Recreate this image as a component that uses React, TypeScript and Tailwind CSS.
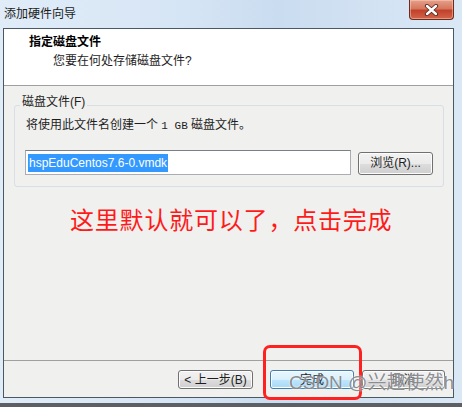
import React from 'react';

const FONT = "font-['Liberation_Sans','Noto_Sans_CJK_SC',sans-serif]";

function WinButton({ label, primary }: { label: string; primary?: boolean }) {
  return (
    <button
      className={
        'w-full h-[19px] rounded-[3px] border text-[12px] leading-none text-[#1e1e1e] flex items-center justify-center ' +
        (primary
          ? 'border-[#3c7fb1] bg-[linear-gradient(#eaf6fd_0%,#d9f0fc_50%,#bee6fd_51%,#a7d9f5_100%)] shadow-[inset_0_0_0_1px_#fff]'
          : 'border-[#707070] bg-[linear-gradient(#f2f2f2_0%,#ebebeb_50%,#dddddd_51%,#cfcfcf_100%)] shadow-[inset_0_0_0_1px_#fcfcfc]')
      }
    >
      {label}
    </button>
  );
}

export default function App() {
  return (
    <div className={`relative w-[462px] h-[407px] overflow-hidden bg-[#5c5f63] ${FONT}`}>
      {/* window frame */}
      <div className="flex flex-col h-[403px] bg-[linear-gradient(90deg,#e0ecf8,#d6e5f5_40%,#cadcf0_60%,#dae8f6)]">
        {/* title bar */}
        <div className="h-[28px] flex items-start justify-between shrink-0">
          <span className="pl-[4px] pt-[6px] text-[12px] leading-[16px] text-[#1b1b1b]">添加硬件向导</span>
          <div className="mr-[8px] w-[45px] h-[20px] rounded-b-[4px] border border-t-0 border-[#6d2a1f] bg-[linear-gradient(#e6a08b_0%,#d6775c_45%,#c2412a_55%,#d2654a_100%)] shadow-[inset_0_0_0_1px_rgba(255,220,200,0.45)] flex items-center justify-center">
            <svg width="15" height="12" viewBox="0 0 15 12">
              <path d="M3 2 L12 10 M12 2 L3 10" stroke="#5a2a22" strokeWidth="4.2" strokeLinecap="round" />
              <path d="M3 2 L12 10 M12 2 L3 10" stroke="#ffffff" strokeWidth="2.4" strokeLinecap="round" />
            </svg>
          </div>
        </div>

        {/* client area */}
        <div className="flex-1 flex flex-col ml-[3px] mr-[8px] mb-[5px] border border-[#4c5764]">
          {/* header */}
          <div className="h-[57px] shrink-0 bg-white border-b border-[#a0a0a0] flex flex-col">
            <p className="pl-[25px] pt-[5px] text-[12px] leading-[16px] font-bold text-black">指定磁盘文件</p>
            <p className="pl-[49px] mt-[3px] text-[12px] leading-[16px] text-[#1e1e1e]">您要在何处存储磁盘文件?</p>
          </div>

          {/* body */}
          <div className="flex-1 flex flex-col bg-[#f0f0ee]">
            <div className="pt-[19px] pl-[10px] pr-[9px]">
              <div className="relative rounded-[3px] border border-[#d5dfe5] pt-[11px] pb-[11px] px-[10px]">
                <span className="absolute left-[5px] top-[-12px] px-[2px] bg-[#f0f0ee] text-[12px] leading-[16px] text-[#1e1e1e]">
                  磁盘文件(F)
                </span>
                <p className="pl-[1px] text-[12px] leading-[16px] text-[#1e1e1e]">
                  将使用此文件名创建一个 <span className="font-['Liberation_Mono',monospace] text-[11px]">1 GB</span> 磁盘文件。
                </p>
                <div className="mt-[16px] flex items-center gap-[7px]">
                  <div className="w-[326px] h-[25px] bg-white border border-[#abadb3] border-t-[#7a7f88] flex items-center px-[2px]">
                    <span className="bg-[#3399ff] text-white text-[12px] leading-[18px] px-[1px]">hspEduCentos7.6-0.vmdk</span>
                  </div>
                  <div className="w-[75px]">
                    <button className="w-full h-[23px] rounded-[3px] border border-[#707070] bg-[linear-gradient(#f2f2f2_0%,#ebebeb_50%,#dddddd_51%,#cfcfcf_100%)] shadow-[inset_0_0_0_1px_#fcfcfc] text-[12px] leading-none text-[#1e1e1e]">
                      浏览(R)...
                    </button>
                  </div>
                </div>
              </div>
            </div>

            <p className="mt-[18px] ml-[66px] text-[24px] leading-[32px] tracking-[0.8px] text-[#ff1a1a]">
              这里默认就可以了，点击完成
            </p>

            <div className="flex-1" />

            <div className="h-px bg-[#a0a0a0]" />
            <div className="h-[36px] flex items-start pt-[9px] pl-[174px]">
              <div className="w-[75px]"><WinButton label="< 上一步(B)" /></div>
              <div className="w-[84px] ml-[17px]"><WinButton label="完成" primary /></div>
              <div className="w-[83px] ml-[8px]"><WinButton label="取消" /></div>
            </div>
          </div>
        </div>
      </div>

      {/* red highlight frame drawn over the finish button */}
      <div className="absolute left-[263px] top-[345px] w-[99px] h-[55px] rounded-[7px] border-[3px] border-[#ff2020]" />

      {/* watermark */}
      <span className="absolute left-[289px] top-[371px] text-[19px] leading-[24px] text-[#7d8084]/90 [text-shadow:0_0_2px_rgba(255,255,255,1)] whitespace-nowrap">
        CSDN @兴趣使然h
      </span>
    </div>
  );
}
